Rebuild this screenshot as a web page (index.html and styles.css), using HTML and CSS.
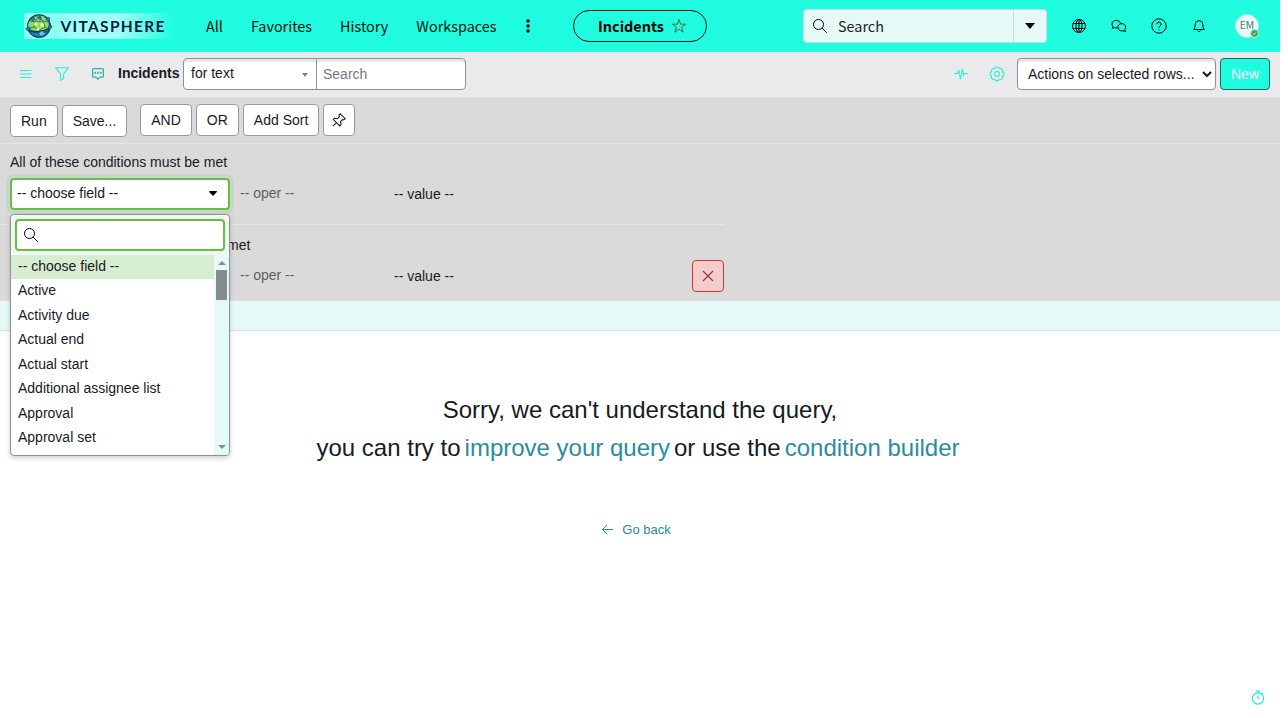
FILE: index.html
```html
<!DOCTYPE html>
<html lang="en">
<head>
<meta charset="utf-8">
<title>Incidents</title>
<link rel="stylesheet" href="styles.css">
</head>
<body>
<div class="app">
  <header class="top">
    <div class="logo">
      <svg class="globe" width="30" height="26" viewBox="0 0 30 26">
        <rect width="30" height="26" fill="#8dfff0"/>
        <circle cx="15" cy="13" r="11.3" fill="#2e8c9b" stroke="#123c50" stroke-width="1.1"/>
        <path d="M5 9l5-5 9-1 5 5 1 8-8 3-9-2-4-4z" fill="#8fdc62"/>
        <path d="M6 8l5 1 3-5 5 4 6 1M11 9l-1 5 6 3 5-3-2-6M10 14l-5 1M16 17v4M21 14l4 2M11 9l8-1" fill="none" stroke="#28635c" stroke-width=".8"/>
        <path d="M5 18c6 2 14 3 20-1-2 5-6 7-10 7s-8-2-10-6z" fill="#257fac" stroke="#103752" stroke-width=".8"/>
        <path d="M2 15c3 5 19 5 26-2" fill="none" stroke="#17394f" stroke-width="1.1"/>
        <path d="M15 20l3-2 3 3-4 2z" fill="#62caec"/>
        <g fill="#397fae" stroke="#163c55" stroke-width=".6"><circle cx="9" cy="6" r="1.7"/><circle cx="24" cy="6" r="1.8"/><circle cx="16" cy="5" r="1.4"/><circle cx="4" cy="16" r="1.5"/><circle cx="26" cy="14" r="1.6"/></g>
        <g fill="#d9f89b"><circle cx="12" cy="11" r="2"/><circle cx="18" cy="12" r="2"/><circle cx="14" cy="16" r="1.5"/></g>
      </svg>
      <svg class="word" width="120" height="26"><text x="6.5" y="18.5" textLength="104">VITASPHERE</text></svg>
    </div>
    <nav class="nav"><a>All</a><a>Favorites</a><a>History</a><a>Workspaces</a></nav>
    <svg class="dots" width="4" height="14" viewBox="0 0 4 14"><circle cx="2" cy="2" r="1.7"/><circle cx="2" cy="7" r="1.7"/><circle cx="2" cy="12" r="1.7"/></svg>
    <div class="pill"><b>Incidents</b><svg width="16" height="16" viewBox="0 0 16 16" class="star"><path d="M8 1.500l1.600 4.700h5l-4 3 1.500 5L8 11.300l-4.100 2.900 1.500-5-4-3h5z"/></svg></div>
    <div class="gsearch">
      <svg class="line mag" width="16" height="16" viewBox="0 0 16 16"><circle cx="6.500" cy="6.500" r="5"/><path d="M10.100 10.100l4.700 4.700"/></svg>
      <span class="gtext">Search</span>
      <span class="gdrop"><svg width="10" height="6"><path d="M0 0h10L5 6z"/></svg></span>
    </div>
    <div class="tools">
      <svg class="line" width="16" height="16" viewBox="0 0 16 16"><circle cx="8" cy="8" r="6.500"/><ellipse cx="8" cy="8" rx="3" ry="6.500"/><path d="M2.200 5.500h11.600M2.200 10.500h11.600M8 1.500v13"/></svg>
      <svg class="line" width="16" height="16" viewBox="0 0 16 16"><path d="M6.800 9.700C5.700 10.100 4.600 10 3.700 9.600L1.300 10.300 2 8.300C1.200 7.500 1 6.800 1 6 1 4 2.800 2.400 5.200 2.400S9.300 3.800 9.500 5.600"/><path d="M10.800 5.600C13 5.600 14.700 7.200 14.700 9.200c0 .9-.3 1.600-.9 2.200L14.500 13.600 12 12.800C9 13.500 6.900 11.500 6.900 9.200 6.900 7.200 8.600 5.600 10.800 5.600z"/></svg>
      <svg class="line" width="16" height="16" viewBox="0 0 16 16"><circle cx="8" cy="8" r="7.200"/><path d="M5.900 6.200a2.100 2.100 0 1 1 3.100 1.800c-.7.4-1 .8-1 1.700M8 11v1.200"/></svg>
      <svg class="line" width="16" height="16" viewBox="0 0 16 16"><path d="M2.500 11.500c1.200-1 1.600-2 1.600-5a3.900 3.900 0 0 1 7.800 0c0 3 .4 4 1.600 5zM6.500 12.500a1.600 1.600 0 0 0 3 0"/></svg>
    </div>
    <div class="avatar">EM<i class="presence"><svg width="7" height="7"><path d="M1.800 3.600l1.200 1 2-2"/></svg></i></div>
  </header>

  <section class="listbar">
    <svg class="aq burger" width="12" height="10"><path d="M0 1.500h11.500M0 5h11.500M0 8.500h11.500"/></svg>
    <svg class="aq funnel" width="14" height="14" viewBox="0 0 14 14"><path d="M.7.700h12.600L8.600 7v4.700L5.500 13.300V7z"/></svg>
    <svg class="chat" width="12" height="12" viewBox="0 0 12 12"><path d="M1.500.600h9q.9 0 .9.900v6.800q0 .9-.9.900H8L6 11.300l-2-2.100H1.500q-.9 0-.9-.9V1.500q0-.9.900-.9z"/><path d="M2.300 4.800h1.700M5.150 4.800h1.700M8 4.800h1.700" stroke-width="1.900"/></svg>
    <b class="title">Incidents</b>
    <div class="combo"><span>for text</span><svg width="6" height="4"><path d="M0 0h6L3 3.800z"/></svg></div>
    <div class="find">Search</div>
    <svg class="aq pulse" width="14" height="14" viewBox="0 0 14 14"><path d="M0 6.500h3.500L4.800 3.500l1.700 9L8.300 2l1.300 6 1-1.500H14"/></svg>
    <svg class="aq gear" width="16" height="16" viewBox="0 0 16 16"><circle cx="8" cy="8" r="2.500"/><path d="M6.400 1.200h3.200l.7 1.500 1.600-.4 1.900 2-.4 1.500 1.400.9v2.800l-1.500.8.4 1.600-2 1.800-1.500-.5-.7 1.400H6.500l-.8-1.500-1.500.5-2-1.900.4-1.600-1.400-.8V6.500l1.500-.8-.4-1.500 2-1.900 1.500.5z"/></svg>
    <div class="actions"><span>Actions on selected rows...</span><svg width="10" height="7"><path d="M1 1l4 4 4-4"/></svg></div>
    <button class="new">New</button>
  </section>

  <section class="filter">
    <div class="buttons">
      <button class="btn low">Run</button><button class="btn low save">Save...</button><i class="sep"></i>
      <button class="btn">AND</button><button class="btn">OR</button><button class="btn">Add Sort</button>
      <button class="btn pin"><svg width="14" height="14" viewBox="0 0 14 14"><path d="M8.300.800l4.900 4.900-1.500 1.300-1.200-.4-2 2.100.6 2.900-1.300 1.300L1.300 6.500l1.300-1.300 2.900.5 2-2-.5-1.500zM4.700 9.700L.8 13.200"/></svg></button>
    </div>
    <div class="group">
      <div class="label">All of these conditions must be met</div>
      <div class="row">
        <div class="field"><span>-- choose field --</span><svg width="8" height="5"><path d="M.2 0h7.600v1L4 5 .2 1z"/></svg></div>
        <span class="oper">-- oper --</span><span class="value">-- value --</span>
      </div>
    </div>
    <div class="group second">
      <div class="label">OR all of these conditions must be met</div>
      <div class="row">
        <div class="field idle"></div>
        <span class="oper">-- oper --</span><span class="value">-- value --</span>
        <button class="del"><svg width="12" height="12"><path d="M1 1l10 10M11 1L1 11"/></svg></button>
      </div>
    </div>
    <div class="menu">
      <div class="msearch"><svg class="line mag" width="16" height="16" viewBox="0 0 16 16"><circle cx="6.500" cy="6.500" r="5"/><path d="M10.100 10.100l4.700 4.700"/></svg></div>
      <div class="mbody">
        <ul><li class="on">-- choose field --</li><li>Active</li><li>Activity due</li><li>Actual end</li><li>Actual start</li><li>Additional assignee list</li><li>Approval</li><li>Approval set</li></ul>
        <div class="scroll"><svg width="8" height="4"><path d="M0 4h8L4 0z"/></svg><i class="thumb"></i><svg width="8" height="4"><path d="M0 0h8L4 4z"/></svg></div>
      </div>
    </div>
  </section>
  <div class="crumbs"></div>

  <main class="msg">
    <p>Sorry, we can't understand the query,</p>
    <p class="two"><span>you can try to</span><a>improve your query</a><span>or use the</span><a>condition builder</a></p>
    <a class="back"><svg width="12" height="12"><path d="M12 5.500H1.500M6 .8L1.600 5.500 6 10.200"/></svg>Go back</a>
  </main>
  <svg class="timer" width="14" height="16" viewBox="0 0 14 16"><circle cx="7" cy="8.500" r="5.600"/><path d="M5 1.200h4M7 1.200v2M7 5.500V9.500M11 4l1-1"/></svg>
</div>
</body>
</html>
```
FILE: styles.css
```css
* { box-sizing: border-box; }
body { margin: 0; background: #fff; font: 14px/20px "Liberation Sans", Arial, sans-serif; color: #181a1f; overflow: hidden; }
button { font: inherit; color: inherit; margin: 0; }
svg { display: block; flex: none; }
.app { width: 1280px; height: 718px; position: relative; }
.line { fill: none; stroke: #000; stroke-width: 1; }
.top { height: 52px; background: #1ffcdf; display: flex; align-items: center; font-family: "Noto Sans CJK SC", sans-serif; font-size: 14.4px; color: #00120f; }
.top > * { flex: none; }
.logo { margin-left: 24px; width: 150px; height: 26px; display: flex; background: linear-gradient(90deg, #6efbea, #a1fff5 35%, #a1fff5 62%, #1ffcdf); }
.word text { font: bold 15.5px Lato, sans-serif; fill: #06213f; }
.nav { display: flex; gap: 28px; margin-left: 32px; width: 290px; white-space: nowrap; }
.dots { margin-left: 30px; }
.pill { margin-left: 43px; width: 134px; height: 32px; border: 1px solid #00120f; border-radius: 16px; display: flex; align-items: center; justify-content: center; gap: 7px; padding-left: 5px; }
.pill b { color: #000; }
.star { fill: none; stroke: #3e6b4e; stroke-width: 1; }
.gsearch { margin-left: 96px; width: 244px; height: 34px; background: #e5faf7; border: 1px solid #c6dfdc; border-radius: 4px; display: flex; align-items: center; }
.gsearch .mag { margin-left: 8px; }
.gtext { margin-left: 10px; flex: 1; color: #1c2423; }
.gdrop { width: 33px; height: 32px; border-left: 1px solid #c6dfdc; display: flex; align-items: center; justify-content: center; }
.tools { margin-left: 24px; display: flex; gap: 24px; }
.avatar { position: relative; margin-left: 28px; width: 24px; height: 24px; border-radius: 50%; background: #e5faf7; border: 1px solid #bfe0da; font-size: 10.5px; line-height: 20px; text-align: center; color: #667673; }
.presence { position: absolute; right: -1px; bottom: -1px; width: 9px; height: 9px; border-radius: 50%; background: #43a05e; border: 1px solid #c9f1e0; }
.presence path { fill: none; stroke: #fff; stroke-width: .8; }
.listbar { height: 46px; background: #e9eaec; border-bottom: 1px solid #e0e1e3; display: flex; align-items: center; padding: 0 10px 2px 20px; }
.aq { fill: none; stroke: #2beed7; stroke-width: 1.1; }
.burger { margin-top: 1px; }
.funnel { margin-left: 23px; margin-top: 1px; }
.chat { margin-left: 23px; fill: none; stroke: #2fb0a0; stroke-width: 1.2; margin-top: 1px; }
.title { margin-left: 14px; width: 65px; margin-top: -1px; }
.combo, .find, .actions { height: 32px; background: #fff; border: 1px solid #8c909c; box-shadow: inset 0 3px 0 #e6e8ea; display: flex; align-items: center; justify-content: space-between; }
.combo { width: 134px; border-radius: 4px 0 0 4px; padding: 0 8px 2px 7px; }
.combo svg { margin-top: 5px; fill: #777b87; }
.find { width: 150px; margin-left: -1px; border-radius: 0 4px 4px 0; padding-left: 6px; color: #747985; }
.pulse { margin-left: auto; }
.gear { margin-left: 21px; }
.actions { width: 199px; margin-left: 12px; border-radius: 4px; padding: 0 3px 0 10px; }
.actions svg { margin-top: 1px; }
.actions path { fill: none; stroke: #181a1f; stroke-width: 2; }
.new { width: 50px; height: 32px; margin-left: 4px; padding: 0; border: 1px solid #116f67; border-radius: 4px; background: #1ffcdf; color: #fff; }
.filter { position: relative; height: 202px; background: #dadada; }
.buttons { height: 46px; border-bottom: 1px solid #e5e6ea; display: flex; gap: 4px; padding: 6px 10px; }
.btn { height: 32px; padding: 0 10px; background: #fff; border: 1px solid #969a9d; border-radius: 4px; }
.btn.low { margin-top: 1px; }
.sep { width: 1px; height: 16px; margin: 9px 2px 0; background: #d5d5d7; }
.btn.pin { width: 32px; padding: 0 8px; }
.pin path { fill: none; stroke: #181a1f; stroke-width: 1.05; }
.group { height: 81px; width: 724px; padding: 8px 0 0 10px; border-bottom: 1px solid #e5e6ea; }
.second { height: 75px; border: 0; padding-top: 10px; }
.label { height: 26px; }
.second .label { height: 25px; }
.row { display: flex; height: 32px; align-items: center; }
.field { width: 220px; height: 32px; background: #fff; border: 2px solid #65bd4b; border-radius: 4px; box-shadow: 0 0 0 4px #65bd4b22; padding: 0 11px 2px 5px; display: flex; align-items: center; justify-content: space-between; }
.field.idle { border: 1px solid #8c909c; box-shadow: none; }
.oper { margin: -2px 0 0 10px; width: 154px; color: #5c5f64; }
.del { margin-left: auto; width: 32px; height: 32px; padding: 0 9px; border: 1px solid #cc3932; border-radius: 4px; background: #f3cccc; }
.del path { stroke: #8e3837; stroke-width: 1.2; }
.menu { position: absolute; left: 10px; top: 116px; width: 220px; height: 242px; background: #fff; border: 1px solid #8c909c; border-radius: 4px; box-shadow: 0 2px 5px #0003; z-index: 2; overflow: hidden; }
.msearch { margin: 4px; height: 32px; border: 2px solid #65bd4b; border-radius: 4px; box-shadow: 0 0 0 4px #65bd4b1c; display: flex; align-items: center; padding-left: 6px; }
.mbody { display: flex; height: 200px; }
.mbody ul { flex: 1; list-style: none; margin: 0; padding: 0; }
.mbody li { height: 24.5px; line-height: 23px; padding-left: 7px; }
.mbody .on { height: 24.2px; background: #d7edd2; }
.scroll { width: 15px; background: #e5faf7; display: flex; flex-direction: column; align-items: center; padding: 6px 0 6px; fill: #868b8d; }
.thumb { width: 11px; height: 30px; margin: 5px 0 auto; background: #868b8d; }
.crumbs { height: 31px; background: #e5faf7; border-top: 1px solid #dddfe2; border-bottom: 1px solid #dddfe4; }
.msg { display: flex; flex-direction: column; align-items: center; padding-top: 60px; }
.msg p { margin: 0; height: 38px; font-size: 24px; line-height: 38px; }
.msg a { color: #2b8c9e; }
.two { display: flex; gap: 4px; padding-right: 4px; }
.back { margin-top: 53px; padding-right: 8px; display: flex; align-items: center; gap: 9px; font-size: 13px; }
.back path { fill: none; stroke: #2b8c9e; }
.timer { position: absolute; left: 1251px; top: 690px; fill: none; stroke: #20f0d8; stroke-width: 1.2; }
```
